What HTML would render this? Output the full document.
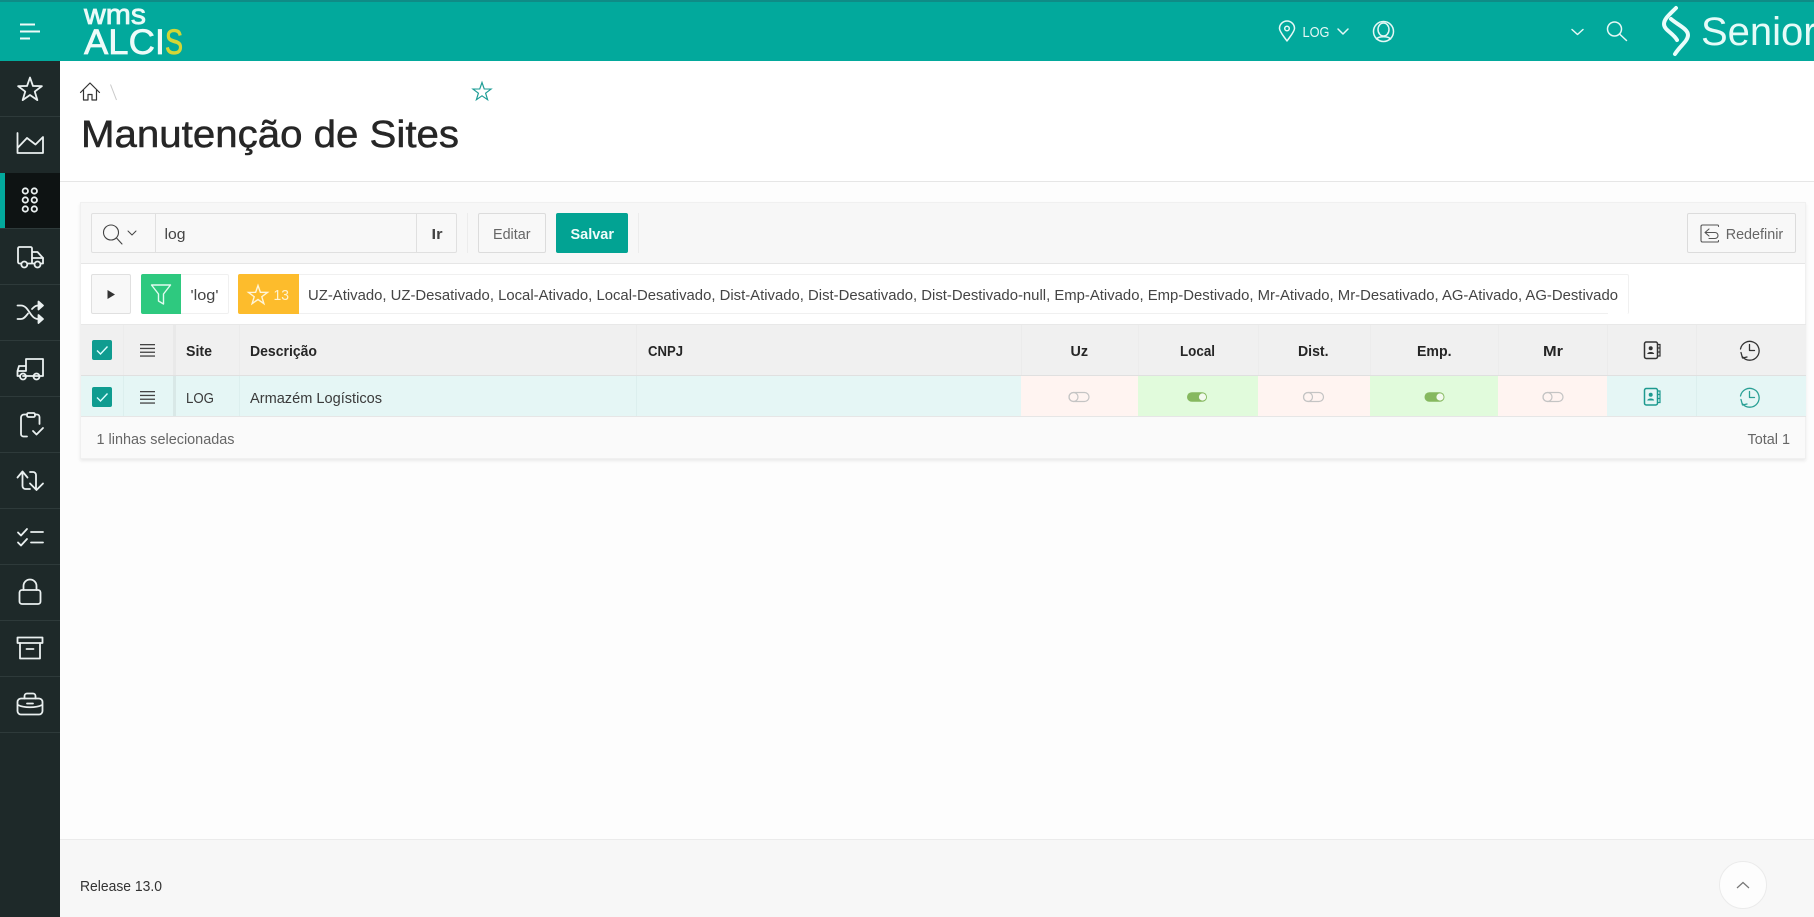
<!DOCTYPE html>
<html lang="pt"><head><meta charset="utf-8"><title>Manutenção de Sites</title>
<style>
html,body{margin:0;padding:0;width:1814px;height:917px;overflow:hidden;background:#fdfdfd;font-family:"Liberation Sans",sans-serif}
.b{position:absolute;box-sizing:border-box}
svg text{font-family:"Liberation Sans",sans-serif;font-size:14.5px;fill:#3a3a3a}
svg .h{font-weight:700;fill:#262626}
svg .ic{fill:none;stroke-linecap:round;stroke-linejoin:round}
</style></head><body>
<!-- header -->
<div class="b" style="left:0;top:0;width:1814px;height:61px;background:#02a99c;border-top:2px solid #0f8b86"></div>
<!-- sidebar -->
<div class="b" style="left:0;top:61px;width:60px;height:856px;background:#1e2929"></div>
<div class="b" style="left:0;top:173px;width:60px;height:56px;background:#0e1313"></div>
<div class="b" style="left:0;top:173px;width:5px;height:56px;background:#02a99c"></div>
<div class="b" style="left:0;top:116px;width:60px;height:1px;background:#2e3a3a"></div>
<div class="b" style="left:0;top:228px;width:60px;height:1px;background:#2e3a3a"></div>
<div class="b" style="left:0;top:284px;width:60px;height:1px;background:#2e3a3a"></div>
<div class="b" style="left:0;top:340px;width:60px;height:1px;background:#2e3a3a"></div>
<div class="b" style="left:0;top:396px;width:60px;height:1px;background:#2e3a3a"></div>
<div class="b" style="left:0;top:452px;width:60px;height:1px;background:#2e3a3a"></div>
<div class="b" style="left:0;top:508px;width:60px;height:1px;background:#2e3a3a"></div>
<div class="b" style="left:0;top:564px;width:60px;height:1px;background:#2e3a3a"></div>
<div class="b" style="left:0;top:620px;width:60px;height:1px;background:#2e3a3a"></div>
<div class="b" style="left:0;top:676px;width:60px;height:1px;background:#2e3a3a"></div>
<div class="b" style="left:0;top:732px;width:60px;height:1px;background:#2e3a3a"></div>
<!-- title band -->
<div class="b" style="left:60px;top:61px;width:1754px;height:121px;background:#fff;border-bottom:1px solid #e6e6e6"></div>
<!-- region -->
<div class="b" style="left:80px;top:202px;width:1726px;height:257px;background:#fff;border:1px solid #f0f0f0;box-shadow:0 2px 3px rgba(0,0,0,.08)"></div>
<div class="b" style="left:81px;top:203px;width:1724px;height:61px;background:#f7f7f7;border-bottom:1px solid #e6e6e6"></div>
<!-- search -->
<div class="b" style="left:91px;top:213px;width:65px;height:40px;background:#f8f8f8;border:1px solid #e0e0e0;border-radius:2px 0 0 2px"></div>
<div class="b" style="left:155px;top:213px;width:262px;height:40px;background:#f8f8f8;border:1px solid #e0e0e0"></div>
<div class="b" style="left:416px;top:213px;width:41px;height:40px;background:#f8f8f8;border:1px solid #e0e0e0;border-radius:0 2px 2px 0"></div>
<div class="b" style="left:467px;top:213px;width:1px;height:40px;background:#ececec"></div>
<div class="b" style="left:478px;top:213px;width:68px;height:40px;background:#f8f8f8;border:1px solid #dcdcdc;border-radius:2px"></div>
<div class="b" style="left:556px;top:213px;width:72px;height:40px;background:#02a393;border-radius:2px"></div>
<div class="b" style="left:638px;top:213px;width:1px;height:40px;background:#ececec"></div>
<div class="b" style="left:1687px;top:213px;width:109px;height:40px;background:#f8f8f8;border:1px solid #dcdcdc;border-radius:2px"></div>
<!-- filter row -->
<div class="b" style="left:91px;top:274px;width:40px;height:40px;background:#f8f8f8;border:1px solid #e0e0e0;border-radius:2px"></div>
<div class="b" style="left:141px;top:274px;width:88px;height:40px;background:#fff;border:1px solid #f0f0f0;border-radius:2px"></div>
<div class="b" style="left:141px;top:274px;width:40px;height:40px;background:#2ec97f;border-radius:2px 0 0 2px"></div>
<div class="b" style="left:238px;top:274px;width:1391px;height:40px;background:#fff;border:1px solid #f0f0f0;border-bottom:0;border-radius:2px"></div>
<div class="b" style="left:238px;top:274px;width:61px;height:40px;background:#fdbc2c;border-radius:2px 0 0 2px"></div>
<div class="b" style="left:299px;top:313px;width:1309px;height:1px;background:#f0f0f0"></div>
<!-- table head -->
<div class="b" style="left:81px;top:324px;width:1725px;height:52px;background:#f0f0f0;border-top:1px solid #e8e8e8;border-bottom:1px solid #e0e0e0"></div>
<!-- data row -->
<div class="b" style="left:81px;top:376px;width:1725px;height:41px;background:#e5f6f5;border-bottom:1px solid #e6e6e6"></div>
<div class="b" style="left:1021px;top:376px;width:117px;height:40px;background:#fff4f1"></div>
<div class="b" style="left:1138px;top:376px;width:120px;height:40px;background:#e1fbdc"></div>
<div class="b" style="left:1258px;top:376px;width:112px;height:40px;background:#fff4f1"></div>
<div class="b" style="left:1370px;top:376px;width:128px;height:40px;background:#e1fbdc"></div>
<div class="b" style="left:1498px;top:376px;width:109px;height:40px;background:#fff4f1"></div>
<!-- footer of table -->
<div class="b" style="left:81px;top:417px;width:1724px;height:41px;background:#fafafa"></div>
<!-- column separators -->
<div class="b" style="left:123px;top:325px;width:1px;height:50px;background:#ececec"></div>
<div class="b" style="left:173px;top:325px;width:3px;height:50px;background:#e9e9e9"></div>
<div class="b" style="left:239px;top:325px;width:1px;height:50px;background:#ebebeb"></div>
<div class="b" style="left:636px;top:325px;width:1px;height:50px;background:#ebebeb"></div>
<div class="b" style="left:1021px;top:325px;width:1px;height:50px;background:#ebebeb"></div>
<div class="b" style="left:1138px;top:325px;width:1px;height:50px;background:#ececec"></div>
<div class="b" style="left:1258px;top:325px;width:1px;height:50px;background:#ececec"></div>
<div class="b" style="left:1370px;top:325px;width:1px;height:50px;background:#ececec"></div>
<div class="b" style="left:1498px;top:325px;width:1px;height:50px;background:#ececec"></div>
<div class="b" style="left:1607px;top:325px;width:1px;height:50px;background:#ebebeb"></div>
<div class="b" style="left:1696px;top:325px;width:1px;height:50px;background:#ebebeb"></div>
<div class="b" style="left:123px;top:376px;width:1px;height:40px;background:#dcefee"></div>
<div class="b" style="left:173px;top:376px;width:3px;height:40px;background:#d9e8e7"></div>
<div class="b" style="left:239px;top:376px;width:1px;height:40px;background:#dcefee"></div>
<div class="b" style="left:636px;top:376px;width:1px;height:40px;background:#dcefee"></div>
<div class="b" style="left:1696px;top:376px;width:1px;height:40px;background:#dcefee"></div>
<!-- page footer -->
<div class="b" style="left:60px;top:839px;width:1754px;height:78px;background:#f7f7f7;border-top:1px solid #ebebeb"></div>
<div class="b" style="left:1719px;top:861px;width:48px;height:48px;border-radius:50%;background:#fdfdfd;border:1px solid #ebebeb"></div>

<svg class="b" style="left:0;top:0" width="1814" height="917" viewBox="0 0 1814 917" xmlns="http://www.w3.org/2000/svg">
<defs>
<polygon id="star" points="0,-1 .235,-.324 .951,-.309 .38,.124 .588,.809 0,.4 -.588,.809 -.38,.124 -.951,-.309 -.235,-.324" vector-effect="non-scaling-stroke"/>
<g id="menu4" fill="#444"><rect x="0" y="0" width="15" height="1.3"/><rect x="0" y="3.800" width="15" height="1.3"/><rect x="0" y="7.600" width="15" height="1.3"/><rect x="0" y="11.400" width="15" height="1.3"/></g>
<g id="cb"><rect width="20" height="20" rx="2" fill="#0f9c90"/><path d="M5 10.500l3.500 3.500L15.500 6.500" fill="none" stroke="#dff" stroke-width="1.400"/></g>
<g id="contact" fill="none" stroke-width="1.500"><rect x="0" y="0" width="13" height="16.500" rx="1.800"/><path d="M13 2.500h2.500V14H13M13 6h2.500M13 10h2.500" stroke-width="1.200"/><circle cx="6.200" cy="6.300" r="2" fill="currentColor" stroke="none"/><path d="M2.700 12c.5-2.600 6.500-2.600 7 0z" fill="currentColor" stroke="none"/></g>
<g id="clock" fill="none" stroke-width="1.300" stroke-linecap="round" stroke-linejoin="round"><path d="M3 16.800A9.400 9.400 0 1 0 1 9"/><path d="M10 4.500V10.500H15"/><path d="M1.500 12.500L3 18L7.500 17"/></g>
<g id="off" fill="none" stroke="#c4c4c4" stroke-width="1.200"><rect x="-10" y="-4.500" width="20" height="9" rx="4.500"/><circle cx="-5.500" cy="0" r="4.500"/></g>
<g id="on"><rect x="-10" y="-4.800" width="20" height="9.600" rx="4.800" fill="#86b85f"/><circle cx="5.500" cy="0" r="3.600" fill="#f3faef"/></g>
</defs>

<!-- header icons -->
<g fill="#eefbf9"><rect x="20" y="23.500" width="15" height="2"/><rect x="20" y="30.500" width="20" height="2"/><rect x="20" y="37.500" width="10" height="2"/></g>
<text x="84" y="24" textLength="62" lengthAdjust="spacingAndGlyphs" style="font-size:29px;fill:#eafaf8;stroke:#eafaf8;stroke-width:.8">wms</text>
<text x="84" y="54" textLength="81" lengthAdjust="spacingAndGlyphs" style="font-size:35px;fill:#eefbf9;stroke:#eefbf9;stroke-width:.7">ALCI</text>
<text x="165" y="54" textLength="18" lengthAdjust="spacingAndGlyphs" style="font-size:35px;fill:#d3d637;stroke:#d3d637;stroke-width:.8">S</text>

<g class="ic" stroke="#e6f8f6" stroke-width="1.500">
<path d="M1287 41c-3.500-5-7.500-9.500-7.500-12.500a7.500 7.500 0 0 1 15 0c0 3-4 7.500-7.500 12.500z"/><circle cx="1287" cy="28.500" r="2.300"/>
<path d="M1338 29l5 5 5-5"/>
<circle cx="1383.500" cy="31.500" r="10"/><ellipse cx="1383.500" cy="29.500" rx="5.500" ry="6.500"/><path d="M1376.500 39c2-3 12-3 14 0"/>
<path d="M1572 29.500l5.500 5 5.500-5"/>
<circle cx="1614.500" cy="29" r="7"/><path d="M1619.500 34l7 6.500"/>
</g>
<text x="1302.500" y="37" textLength="27" lengthAdjust="spacingAndGlyphs" style="font-size:15px;fill:#e6f8f6">LOG</text>
<g fill="none" stroke="#eafdfb" stroke-width="4" stroke-linecap="round"><path d="M1676 8C1669 15 1664 19 1664 24C1664 30 1673 33 1677 40"/><path d="M1671 19C1678 25 1688 29 1688 35C1688 41 1680 46 1675 54"/></g>
<text x="1701" y="45" style="font-size:40px;fill:#e6fbf8">Senior</text>

<!-- sidebar icons -->
<g class="ic" stroke="#eaf0f0" stroke-width="1.800">
<use href="#star" transform="translate(30,90) scale(12.500)"/>
<path d="M17.500 133V153H43V137L35.500 144.500L27 138L17.500 148"/>
<circle cx="25.300" cy="191" r="2.700"/><circle cx="34.300" cy="191" r="2.700"/><circle cx="25.300" cy="200" r="2.700"/><circle cx="34.300" cy="200" r="2.700"/><circle cx="25.300" cy="209" r="2.700"/><circle cx="34.300" cy="209" r="2.700"/>
<path d="M21 263.500H19.500A1.500 1.500 0 0 1 18 262V248.500A1.500 1.500 0 0 1 19.500 247H30.500A1.500 1.500 0 0 1 32 248.500V263.500H27.500M32 252H37.500L43 258V263.500H41M32 263.500H34"/><circle cx="24.300" cy="264.500" r="3"/><circle cx="37.500" cy="264.500" r="3"/><path d="M32 258H43"/>
<path d="M17.500 305.500H21C29 305.500 30 319 38 319H42M17.500 319H21C24 319 26 316 28 313.500M32 309C34 307 35.500 305.500 38 305.500H42"/><path d="M38.500 301.500L43 305.500L38.500 309.500Z M38.500 315L43 319L38.500 323Z" fill="#eaf0f0"/>
<path d="M23 376H43V359H26V366M26 366L19 366L17.500 371V376H20M17.500 371H26V366M28 376H35M19 376"/><circle cx="23" cy="376.500" r="3"/><circle cx="36.500" cy="376.500" r="3"/>
<path d="M27 414.500H24A3 3 0 0 0 21 417.500V434A2.500 2.500 0 0 0 23.500 436.500H27M35 414.500H37A2.500 2.500 0 0 1 39.500 417V424"/><rect x="27" y="413" width="8" height="4" rx="1.500"/><path d="M33 431L36.500 434.500L43 428"/>
<path d="M17.500 477.500L22.500 471.500L27.500 477.500M22.500 472V486A3 3 0 0 0 25.500 489H30"/><path d="M30 472H33A3 3 0 0 1 36 475V489.500M30 483.500L36.500 490L43 483.500"/>
<path d="M18 532.500L21 535.500L27 529M18 542.500L21 545.500L27 539"/><path d="M31 532H43M31 542.500H43"/>
<rect x="19.500" y="590" width="21" height="14" rx="2.500"/><path d="M23.500 590V586A6.500 6.500 0 0 1 36.500 586V590"/>
<rect x="17.500" y="637.500" width="25" height="5.500"/><path d="M20 643V658.500H40V643M26.500 649H33.500"/>
<rect x="17.500" y="698.500" width="25" height="16" rx="3.500"/><path d="M24.500 698.500V696A2.500 2.500 0 0 1 27 693.500H33A2.500 2.500 0 0 1 35.500 696V698.500M18 705C24 708 36 708 42 705M27 703.500H33"/>
</g>

<!-- breadcrumb -->
<g class="ic" stroke="#333" stroke-width="1.200"><path d="M80.500 92.500L90 83L99.500 92.500M83.500 90V100H88V94.500H92V100H96.500V90"/></g>
<path d="M110.500 84.500L116.500 100" stroke="#c8c8c8" stroke-width="1"/>
<use href="#star" transform="translate(482,92) scale(9.500)" fill="none" stroke="#1e9d96" stroke-width="1.200"/>
<text x="81" y="147" textLength="378" lengthAdjust="spacingAndGlyphs" style="font-size:38px;fill:#262626;stroke:#262626;stroke-width:.5">Manutenção de Sites</text>

<!-- toolbar -->
<g class="ic" stroke="#444" stroke-width="1.100"><circle cx="111" cy="232.500" r="7.500"/><path d="M116.500 238L122 244"/><path d="M128 231l4 4 4-4" stroke-width="1"/></g>
<text x="164.500" y="239" textLength="21" lengthAdjust="spacingAndGlyphs" style="fill:#444">log</text>
<text x="431.500" y="239" textLength="11" lengthAdjust="spacingAndGlyphs" class="h" style="fill:#444">Ir</text>
<text x="493" y="239" textLength="37.500" lengthAdjust="spacingAndGlyphs" style="fill:#666">Editar</text>
<text x="570.500" y="239" textLength="43.500" lengthAdjust="spacingAndGlyphs" class="h" style="fill:#effcfa">Salvar</text>
<g class="ic" stroke="#555" stroke-width="1.100"><path d="M1718.500 226.500V226A1 1 0 0 0 1717.500 225H1702.500A1.500 1.500 0 0 0 1701 226.500V240.500A1.500 1.500 0 0 0 1702.500 242H1717.500A1 1 0 0 0 1718.500 241V240.500"/><path d="M1709 229L1705 232.500L1709 236M1705.500 232.500H1715A3 3 0 0 1 1715 238.500H1709"/></g>
<text x="1725.700" y="239" textLength="57.500" lengthAdjust="spacingAndGlyphs" style="fill:#666">Redefinir</text>

<!-- filter row -->
<path d="M107.500 290L115 294.500L107.500 299Z" fill="#333"/>
<path d="M151.500 285H170.500L163.500 294V304L158.500 301V294Z" fill="none" stroke="#e2fbef" stroke-width="1.400" stroke-linejoin="round"/>
<text x="190.500" y="300" textLength="28" lengthAdjust="spacingAndGlyphs" style="fill:#444">'log'</text>
<use href="#star" transform="translate(258,295.500) scale(10)" fill="none" stroke="#fff5d8" stroke-width="1.400"/>
<text x="273.500" y="300" textLength="15.500" lengthAdjust="spacingAndGlyphs" style="fill:#fff3cf">13</text>
<text x="308" y="300" textLength="1310" lengthAdjust="spacingAndGlyphs" style="fill:#444">UZ-Ativado, UZ-Desativado, Local-Ativado, Local-Desativado, Dist-Ativado, Dist-Desativado, Dist-Destivado-null, Emp-Ativado, Emp-Destivado, Mr-Ativado, Mr-Desativado, AG-Ativado, AG-Destivado</text>

<!-- table head -->
<use href="#cb" x="92" y="340"/>
<use href="#menu4" x="140" y="344"/>
<text x="186" y="356" textLength="26" lengthAdjust="spacingAndGlyphs" class="h">Site</text>
<text x="250" y="356" textLength="67" lengthAdjust="spacingAndGlyphs" class="h">Descrição</text>
<text x="648" y="356" textLength="35" lengthAdjust="spacingAndGlyphs" class="h">CNPJ</text>
<text x="1070.500" y="356" textLength="17.500" lengthAdjust="spacingAndGlyphs" class="h">Uz</text>
<text x="1180" y="356" textLength="35" lengthAdjust="spacingAndGlyphs" class="h">Local</text>
<text x="1298" y="356" textLength="30.500" lengthAdjust="spacingAndGlyphs" class="h">Dist.</text>
<text x="1417" y="356" textLength="34.500" lengthAdjust="spacingAndGlyphs" class="h">Emp.</text>
<text x="1543" y="356" textLength="20" lengthAdjust="spacingAndGlyphs" class="h">Mr</text>
<use href="#contact" x="1644.500" y="342" stroke="#333" color="#333"/>
<use href="#clock" x="1739.500" y="340" stroke="#333"/>

<!-- data row -->
<use href="#cb" x="92" y="387"/>
<use href="#menu4" x="140" y="391"/>
<text x="186" y="403" textLength="28" lengthAdjust="spacingAndGlyphs">LOG</text>
<text x="250" y="403" textLength="132" lengthAdjust="spacingAndGlyphs">Armazém Logísticos</text>
<use href="#off" x="1079" y="397"/>
<use href="#on" x="1197" y="397"/>
<use href="#off" x="1313.500" y="397"/>
<use href="#on" x="1434.500" y="397"/>
<use href="#off" x="1553" y="397"/>
<use href="#contact" x="1644.500" y="388.500" stroke="#1d9a8f" color="#1d9a8f"/>
<use href="#clock" x="1739.500" y="387" stroke="#2aa095"/>

<!-- table footer -->
<text x="96.500" y="444" textLength="138" lengthAdjust="spacingAndGlyphs" style="fill:#666">1 linhas selecionadas</text>
<text x="1747.500" y="444" textLength="42.500" lengthAdjust="spacingAndGlyphs" style="fill:#666">Total 1</text>

<!-- page footer -->
<text x="80" y="891" textLength="82" lengthAdjust="spacingAndGlyphs" style="fill:#333">Release 13.0</text>
<path d="M1737 888L1743 882.500L1749 888" fill="none" stroke="#777" stroke-width="1.200"/>
</svg>
</body></html>
